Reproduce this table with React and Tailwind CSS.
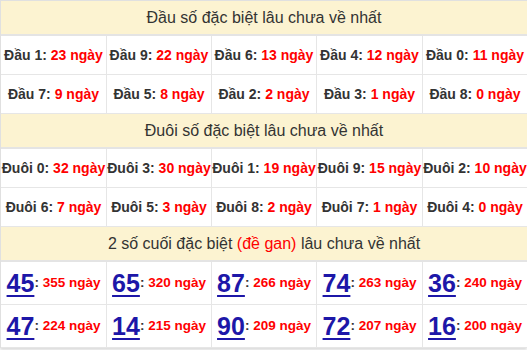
const dau = [
    [["Đầu 1", 23], ["Đầu 9", 22], ["Đầu 6", 13], ["Đầu 4", 12], ["Đầu 0", 11]],
    [["Đầu 7", 9], ["Đầu 5", 8], ["Đầu 2", 2], ["Đầu 3", 1], ["Đầu 8", 0]],
];

const duoi = [
    [["Đuôi 0", 32], ["Đuôi 3", 30], ["Đuôi 1", 19], ["Đuôi 9", 15], ["Đuôi 2", 10]],
    [["Đuôi 6", 7], ["Đuôi 5", 3], ["Đuôi 8", 2], ["Đuôi 7", 1], ["Đuôi 4", 0]],
];

const gan = [
    [["45", 355], ["65", 320], ["87", 266], ["74", 263], ["36", 240]],
    [["47", 224], ["14", 215], ["90", 209], ["72", 207], ["16", 200]],
];

const Header = ({ children }) => (
    <div className="col-span-5 h-[35px] bg-[#fcf3d1] border-b-2 border-r border-[#e4e4e4] flex items-center justify-center text-[16px] text-[#333]">
        {children}
    </div>
)

const Cell = ({ label, days }) => (
    <div className="h-[39px] border-b border-r border-[#e6e6e6] flex items-center justify-center whitespace-nowrap text-[14px] font-bold">
        <span className="text-[#333]">{label}:&nbsp;</span>
        <span className="text-[#ff0000]">{days} ngày</span>
    </div>
)

const BigCell = ({ num, days }) => (
    <div className="h-[43px] border-b border-r border-[#e6e6e6] flex items-center justify-center whitespace-nowrap">
        <span className="text-[25px] leading-none font-bold text-[#1d17a8] underline decoration-2 underline-offset-[3px]">{num}</span>
        <span className="text-[13.5px] font-bold text-[#333]">:&nbsp;</span>
        <span className="text-[13.5px] font-bold text-[#ff0000]">{days} ngày</span>
    </div>
)

const App = () => {
    return (
        <div className="w-[527px] h-[350px] bg-white overflow-hidden" style={{ fontFamily: '"Liberation Sans", Arial, sans-serif' }}>
            <div className="grid grid-cols-[106px_105px_105px_106px_105px] border-t border-l border-[#e0e0e0] shadow-[0_2px_3px_rgba(0,0,0,0.15)]">
                <Header>Đầu số đặc biệt lâu chưa về nhất</Header>
                {dau.flat().map(([l, d]) => <Cell key={l} label={l} days={d} />)}
                <Header>Đuôi số đặc biệt lâu chưa về nhất</Header>
                {duoi.flat().map(([l, d]) => <Cell key={l} label={l} days={d} />)}
                <Header>
                    2 số cuối đặc biệt&nbsp;<span className="text-[#ff0000]">(đề gan)</span>&nbsp;lâu chưa về nhất
                </Header>
                {gan.flat().map(([n, d]) => <BigCell key={n} num={n} days={d} />)}
            </div>
        </div>
    )
}

export default App
